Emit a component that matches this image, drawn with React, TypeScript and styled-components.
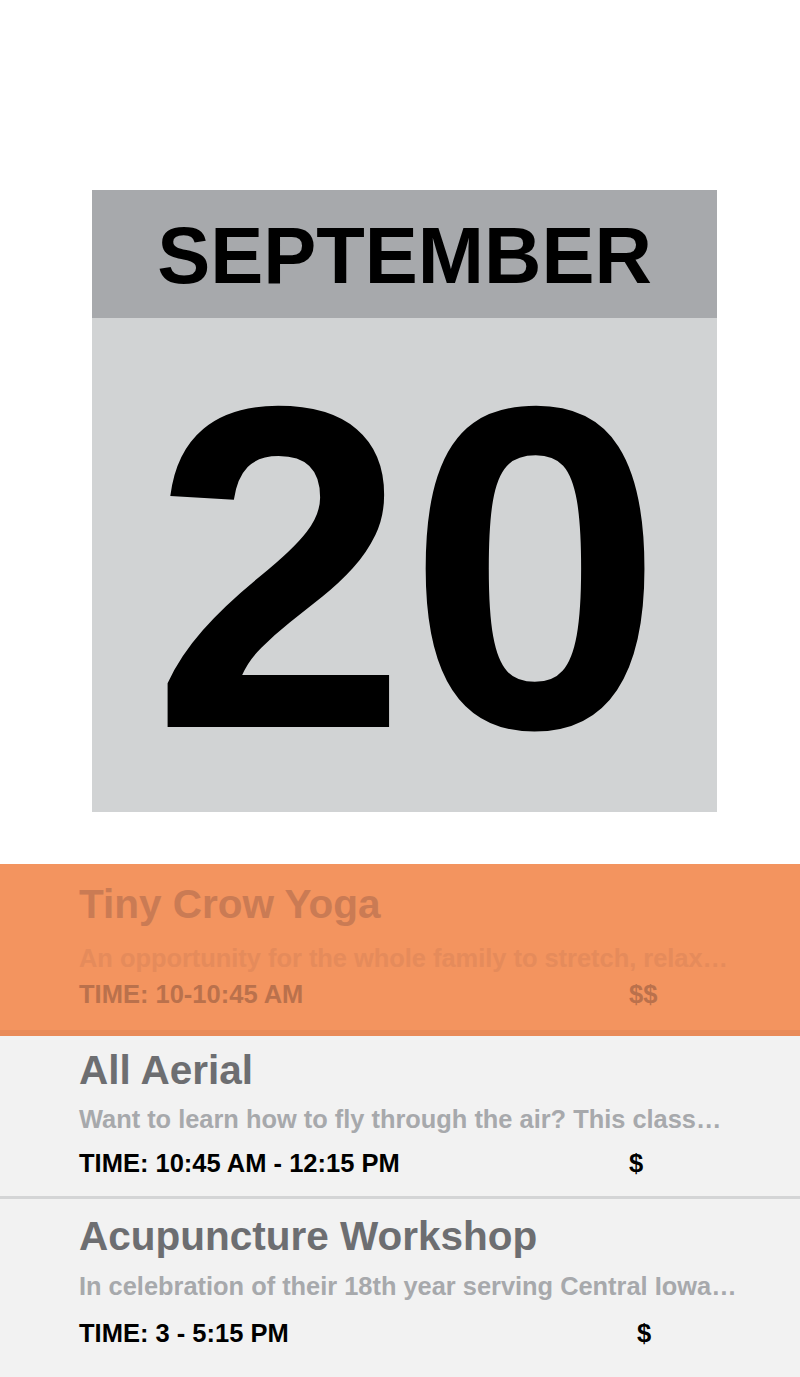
import React from 'react';
import styled, { createGlobalStyle, css } from 'styled-components';

const GlobalStyle = createGlobalStyle`
  html, body {
    margin: 0;
    padding: 0;
    background: #ffffff;
  }
  body {
    font-family: 'Liberation Sans', Arial, Helvetica, sans-serif;
  }
  * {
    box-sizing: border-box;
  }
`;

export const Page = styled.div`
  width: 800px;
  min-height: 100vh;
  display: flex;
  flex-direction: column;
  background-color: #ffffff;
`;

export const CalendarWrap = styled.div`
  padding: 190px 0 52px 92px;
`;

export const Calendar = styled.div`
  width: 625px;
  display: flex;
  flex-direction: column;
`;

export const MonthBar = styled.div`
  height: 128px;
  padding-top: 6px;
  background-color: #a7a9ac;
  color: #000000;
  font-size: 79.5px;
  font-weight: 700;
  line-height: 120px;
  text-align: center;
`;

export const DayBox = styled.div`
  height: 494px;
  display: flex;
  align-items: center;
  justify-content: center;
  padding: 0 0 0 6px;
  background-color: #d1d3d4;
  color: #000000;
  font-size: 460px;
  font-weight: 700;
  line-height: 1;
`;

export const DayNumber = styled.span`
  display: block;
  margin-top: 6px;
`;

export const EventList = styled.div`
  flex: 1;
  display: flex;
  flex-direction: column;
  background-color: #f2f2f2;
`;

type RowProps = {
  $active?: boolean;
  $padTop: number;
  $padBottom: number;
};

export const EventRow = styled.div<RowProps>`
  padding: ${({ $padTop }) => $padTop}px 0 ${({ $padBottom }) => $padBottom}px 79px;
  background-color: #f2f2f2;
  border-bottom: 3px solid #d4d5d6;
  white-space: nowrap;
  color: #000000;

  &:last-child {
    border-bottom: none;
    flex: 1;
  }

  ${({ $active }) =>
    $active &&
    css`
      background-color: #f3945f;
      border-bottom: 6px solid #e98b59;
    `}
`;

export const EventTitle = styled.div<{ $active?: boolean }>`
  font-size: 40.5px;
  font-weight: 700;
  line-height: 48px;
  color: ${({ $active }) => ($active ? '#ca7b54' : '#6d6e71')};
`;

export const EventDesc = styled.div<{ $active?: boolean; $gap: number }>`
  margin-top: ${({ $gap }) => $gap}px;
  font-size: 25.4px;
  font-weight: 700;
  line-height: 30px;
  color: ${({ $active }) => ($active ? '#e58b5b' : '#a7a9ac')};
`;

export const TimeRow = styled.div<{ $active?: boolean; $gap: number; $priceAt: number }>`
  margin-top: ${({ $gap }) => $gap}px;
  display: grid;
  grid-template-columns: ${({ $priceAt }) => $priceAt}px auto;
  font-size: 25.5px;
  font-weight: 700;
  line-height: 30px;
  color: ${({ $active }) => ($active ? '#ba714c' : '#000000')};
`;

export const Price = styled.span``;

type EventItem = {
  title: string;
  desc: string;
  time: string;
  price: string;
  active?: boolean;
  padTop: number;
  padBottom: number;
  descGap: number;
  timeGap: number;
  priceAt: number;
};

const events: EventItem[] = [
  {
    title: 'Tiny Crow Yoga',
    desc: 'An opportunity for the whole family to stretch, relax\u2026',
    time: 'TIME: 10-10:45 AM',
    price: '$$',
    active: true,
    padTop: 16,
    padBottom: 21,
    descGap: 15,
    timeGap: 6,
    priceAt: 550,
  },
  {
    title: 'All Aerial',
    desc: 'Want to learn how to fly through the air? This class\u2026',
    time: 'TIME: 10:45 AM - 12:15 PM',
    price: '$',
    padTop: 10,
    padBottom: 18,
    descGap: 10,
    timeGap: 14,
    priceAt: 550,
  },
  {
    title: 'Acupuncture Workshop',
    desc: 'In celebration of their 18th year serving Central Iowa\u2026',
    time: 'TIME: 3 - 5:15 PM',
    price: '$',
    padTop: 13,
    padBottom: 20,
    descGap: 11,
    timeGap: 17,
    priceAt: 558,
  },
];

export default function App() {
  return (
    <>
      <GlobalStyle />
      <Page>
        <CalendarWrap>
          <Calendar>
            <MonthBar>SEPTEMBER</MonthBar>
            <DayBox>
              <DayNumber>20</DayNumber>
            </DayBox>
          </Calendar>
        </CalendarWrap>
        <EventList>
          {events.map((ev) => (
            <EventRow key={ev.title} $active={ev.active} $padTop={ev.padTop} $padBottom={ev.padBottom}>
              <EventTitle $active={ev.active}>{ev.title}</EventTitle>
              <EventDesc $active={ev.active} $gap={ev.descGap}>
                {ev.desc}
              </EventDesc>
              <TimeRow $active={ev.active} $gap={ev.timeGap} $priceAt={ev.priceAt}>
                <span>{ev.time}</span>
                <Price>{ev.price}</Price>
              </TimeRow>
            </EventRow>
          ))}
        </EventList>
      </Page>
    </>
  );
}
